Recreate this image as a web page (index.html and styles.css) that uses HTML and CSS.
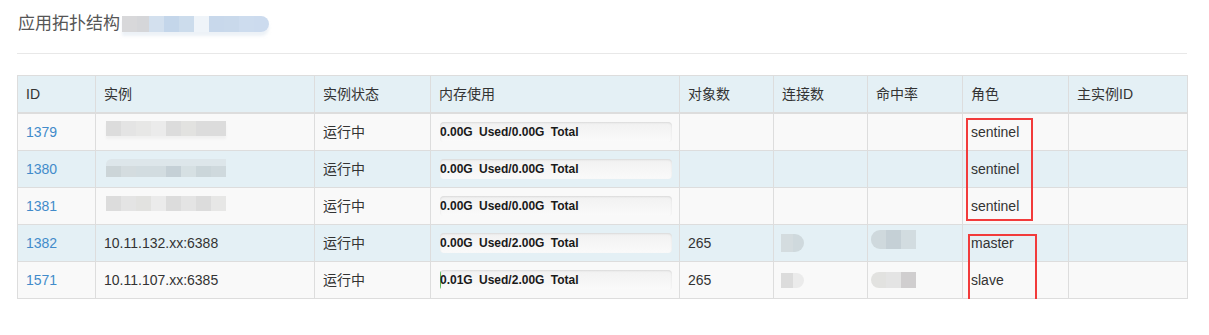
FILE: index.html
```html
<!DOCTYPE html>
<html>
<head>
    <title>应用拓扑结构</title>
    <meta charset="UTF-8"/>
    <link rel="stylesheet" href="styles.css">
</head>
<body>
<div class="page">
    <h3 class="title">应用拓扑结构<span class="mosaic title-mask">
        <i class="t1"></i><i class="t2"></i><i class="t3"></i><i class="t4"></i><i class="t5"></i><i class="t6"></i><i class="t7"></i><i class="t8"></i><i class="t9"></i><i class="t10"></i>
    </span></h3>

    <div class="topo">
        <table class="grid">
            <colgroup>
                <col style="width:78px"><col style="width:219px"><col style="width:116px"><col style="width:249px"><col style="width:94px"><col style="width:94px"><col style="width:95px"><col style="width:106px"><col style="width:119px">
            </colgroup>
            <thead>
                <tr><th>ID</th><th>实例</th><th>实例状态</th><th>内存使用</th><th>对象数</th><th>连接数</th><th>命中率</th><th>角色</th><th>主实例ID</th></tr>
            </thead>
            <tbody>
                <tr>
                    <td><a href="#">1379</a></td>
                    <td><div class="mosaic host-a"><i class="g1"></i><i class="g2"></i><i class="g3"></i><i class="g4"></i><i class="g1"></i><i class="g5"></i><i class="g1"></i><i class="g1"></i></div></td>
                    <td>运行中</td>
                    <td><div class="progress"><div class="bar" style="width:0%"></div><span class="label">0.00G Used/0.00G Total</span></div></td>
                    <td></td><td></td><td></td>
                    <td>sentinel</td><td></td>
                </tr>
                <tr>
                    <td><a href="#">1380</a></td>
                    <td><div class="mosaic host-b"><i class="b1"></i><i class="b2"></i><i class="b3"></i><i class="b3"></i><i class="b4"></i><i class="b5"></i><i class="b6"></i><i class="b7"></i></div></td>
                    <td>运行中</td>
                    <td><div class="progress"><div class="bar" style="width:0%"></div><span class="label">0.00G Used/0.00G Total</span></div></td>
                    <td></td><td></td><td></td>
                    <td>sentinel</td><td></td>
                </tr>
                <tr>
                    <td><a href="#">1381</a></td>
                    <td><div class="mosaic host-c"><i class="g1"></i><i class="g2"></i><i class="g5"></i><i class="g4"></i><i class="g1"></i><i class="g2"></i><i class="g1"></i><i class="g3"></i></div></td>
                    <td>运行中</td>
                    <td><div class="progress"><div class="bar" style="width:0%"></div><span class="label">0.00G Used/0.00G Total</span></div></td>
                    <td></td><td></td><td></td>
                    <td>sentinel</td><td></td>
                </tr>
                <tr>
                    <td><a href="#">1382</a></td>
                    <td>10.11.132.xx:6388</td>
                    <td>运行中</td>
                    <td><div class="progress"><div class="bar" style="width:0%"></div><span class="label">0.00G Used/2.00G Total</span></div></td>
                    <td>265</td>
                    <td><div class="mosaic conn conn-a"><i class="b2"></i><i class="b7"></i></div></td>
                    <td><div class="mosaic hit hit-a"><i class="b7"></i><i class="b4"></i><i class="b3"></i></div></td>
                    <td>master</td><td></td>
                </tr>
                <tr>
                    <td><a href="#">1571</a></td>
                    <td>10.11.107.xx:6385</td>
                    <td>运行中</td>
                    <td><div class="progress"><div class="bar" style="width:0.5%"></div><span class="label">0.01G Used/2.00G Total</span></div></td>
                    <td>265</td>
                    <td><div class="mosaic conn conn-b"><i class="g1"></i><i class="g4"></i></div></td>
                    <td><div class="mosaic hit hit-b"><i class="g5"></i><i class="g2"></i><i class="g6"></i></div></td>
                    <td>slave</td><td></td>
                </tr>
            </tbody>
        </table>
        <div class="mark mark-sentinel"></div>
        <div class="mark mark-data"></div>
    </div>
</div>
</body>
</html>
```

FILE: styles.css
```css
body {
    margin: 0;
    background: #fff;
    color: #333;
    font-family: "Liberation Sans", "Noto Sans CJK SC", sans-serif;
    font-size: 14px;
}
.page {
    width: 1170px;
    margin-left: 17px;
}
.title {
    margin: 12px 0 0 0;
    padding: 0 0 17px 1px;
    border-bottom: 1px solid #e8e8e8;
    font-size: 17px;
    font-weight: normal;
    line-height: 24px;
    color: #555;
    display: flex;
    align-items: center;
}

/* pixelated masks over hidden names */
.mosaic {
    display: flex;
    width: max-content;
    filter: blur(0.4px);
}
.mosaic i {
    display: block;
    flex: none;
    width: 15px;
    height: 100%;
}
.title-mask {
    height: 16px;
    margin-left: 2px;
    border-radius: 0 8px 8px 0;
    overflow: hidden;
    box-shadow: 0 4px 3px rgba(220,230,240,0.5);
}
.t1 { background: #d8d8da; }
.t2 { background: #d5d6d9; width: 12px !important; }
.t3 { background: #d3e0ee; }
.t4 { background: #c4d6ea; }
.t5 { background: #ccdcec; }
.t6 { background: #eff4f9; }
.t7 { background: #c8d8eb; }
.t8 { background: #c9d9eb; }
.t9 { background: #cddcee; }
.t10 { background: #ccdbee; }

.g1 { background: #dcdcdc; }
.g2 { background: #e4e4e4; }
.g3 { background: #e7e7e6; }
.g4 { background: #ebebeb; }
.g5 { background: #e2e2e0; }
.g6 { background: #d0cecf; }
.b1 { background: #ccd5d8; }
.b2 { background: #d4dcdf; }
.b3 { background: #d2dce0; }
.b4 { background: #c5d0d6; }
.b5 { background: #d6e0e3; }
.b6 { background: #cbd6da; }
.b7 { background: #cfd9dd; }

.host-a {
    height: 15px;
    margin: -1px 0 0 2px;
    box-shadow: 0 3px 2px #f0f0f0;
}
.host-b {
    height: 11px;
    margin: 7px 0 0 2px;
    border-radius: 6px 0 0 6px;
    box-shadow: 0 -7px 0 #dde6ea;
}
.host-c {
    height: 15px;
    margin: 0 0 0 2px;
}
.conn {
    height: 18px;
    width: 23px;
    border-radius: 0 9px 9px 0;
    overflow: hidden;
}
.conn i { width: 12px; }
.conn-a { margin: 1px 0 0 -1px; }
.conn-b { margin: 3px 0 0 -1px; height: 15px; }
.hit {
    width: 45px;
    border-radius: 9px 0 0 9px;
    overflow: hidden;
}
.hit-a { height: 19px; margin: -3px 0 0 -5px; }
.hit-b { height: 16px; margin: 2px 0 0 -5px; }

.topo {
    position: relative;
    margin-top: 21px;
}
.grid {
    width: 1170px;
    table-layout: fixed;
    border-collapse: collapse;
    border: 1px solid #ddd;
    font-size: 14px;
}
.grid th, .grid td {
    padding: 8px;
    line-height: 20px;
    height: 20px;
    text-align: left;
    vertical-align: top;
    border: 1px solid #ddd;
    white-space: nowrap;
}
.grid th {
    font-weight: normal;
    background: #e4f0f5;
    border-bottom: 2px solid #ddd;
}
.grid tbody tr:nth-child(odd) td { background: #f9f9f9; }
.grid tbody tr:nth-child(even) td { background: #e4f0f5; }
.grid a {
    color: #428bca;
    text-decoration: none;
}

.progress {
    position: relative;
    height: 20px;
    width: 232px;
    margin-left: 1px;
    border-radius: 4px;
    overflow: hidden;
    background: linear-gradient(#f1f1f1, #fafafa);
    box-shadow: inset 0 1px 2px rgba(0,0,0,0.1);
}
.progress .bar {
    height: 100%;
    background: #5eb95e;
}
.progress .label {
    position: absolute;
    left: 0;
    top: 0;
    line-height: 20px;
    font-size: 12px;
    font-weight: bold;
    word-spacing: 3px;
    color: #1a1a1a;
}

/* red outlines drawn over the role column */
.mark {
    position: absolute;
    border: 2px solid #f23b3b;
}
.mark-sentinel {
    left: 949px;
    top: 43px;
    width: 63px;
    height: 99px;
}
.mark-data {
    left: 951px;
    top: 159px;
    width: 65px;
    height: 64px;
}
```
